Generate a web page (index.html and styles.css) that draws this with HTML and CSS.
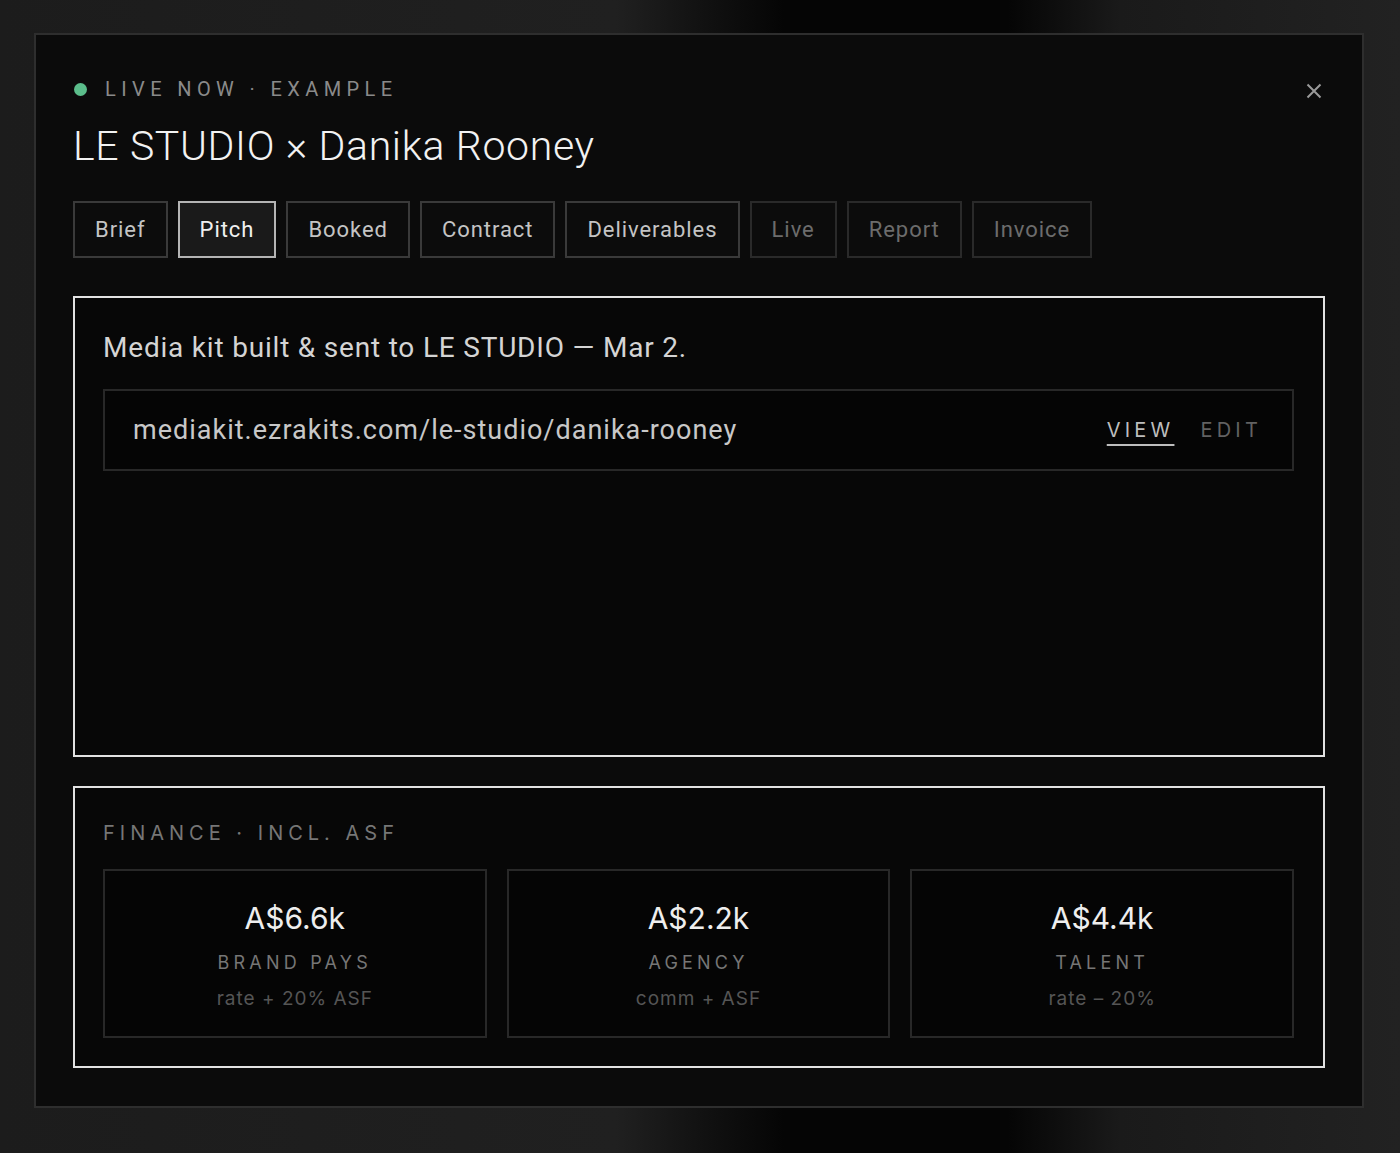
FILE: index.html
```html
<!DOCTYPE html>
<html lang="en">
<head>
  <meta name="viewport" content="width=device-width, initial-scale=1.0">
  <title>LE STUDIO × Danika Rooney</title>
  <link rel="stylesheet" href="styles.css">
</head>
<body>
  <div class="modal">
    <button class="close-button" aria-label="Close">
      <svg width="16" height="16" viewBox="0 0 16 16"><path d="M1.5 1.5 L14.5 14.5 M14.5 1.5 L1.5 14.5" stroke="#9a9a9a" stroke-width="2" fill="none"/></svg>
    </button>

    <div class="status">
      <span class="status-dot"></span>
      <span class="status-text">LIVE NOW · EXAMPLE</span>
    </div>
    <h1 class="deal-title">LE STUDIO × Danika Rooney</h1>

    <div class="stage-tabs">
      <button class="stage-tab">Brief</button>
      <button class="stage-tab active">Pitch</button>
      <button class="stage-tab">Booked</button>
      <button class="stage-tab">Contract</button>
      <button class="stage-tab">Deliverables</button>
      <button class="stage-tab future">Live</button>
      <button class="stage-tab future">Report</button>
      <button class="stage-tab future">Invoice</button>
    </div>

    <section class="stage-panel">
      <p class="stage-note">Media kit built &amp; sent to LE STUDIO — Mar 2.</p>
      <div class="link-box">
        <span class="link-url">mediakit.ezrakits.com/le-studio/danika-rooney</span>
        <div class="link-actions">
          <a href="#" class="link-action primary">VIEW</a>
          <a href="#" class="link-action">EDIT</a>
        </div>
      </div>
    </section>

    <section class="finance-panel">
      <h2 class="finance-heading">FINANCE · INCL. ASF</h2>
      <div class="finance-grid">
        <div class="finance-card">
          <div class="finance-amount">A$6.6k</div>
          <div class="finance-label">BRAND PAYS</div>
          <div class="finance-note">rate + 20% ASF</div>
        </div>
        <div class="finance-card">
          <div class="finance-amount">A$2.2k</div>
          <div class="finance-label">AGENCY</div>
          <div class="finance-note">comm + ASF</div>
        </div>
        <div class="finance-card">
          <div class="finance-amount">A$4.4k</div>
          <div class="finance-label">TALENT</div>
          <div class="finance-note">rate – 20%</div>
        </div>
      </div>
    </section>
  </div>
</body>
</html>
```

FILE: styles.css
```css
body {
  font-family: Roboto, 'Liberation Sans', sans-serif;
  margin: 0;
  padding: 33px 0 0;
  min-height: 100vh;
  box-sizing: border-box;
  color: #ddd;
  background: linear-gradient(90deg, #1c1c1c 0%, #202020 44%, #121212 50%, #050505 56%, #050505 72%, #1a1a1a 80%, #222 100%);
}
.modal {
  position: relative;
  width: 1330px;
  margin: 0 0 0 34px;
  box-sizing: border-box;
  background-color: #0b0b0b;
  border: 2px solid #2e2e2e;
  padding: 42px 37px 38px;
}
.close-button {
  position: absolute;
  top: 48px;
  right: 40px;
  width: 16px;
  height: 16px;
  display: flex;
  align-items: center;
  justify-content: center;
  background: none;
  border: none;
  padding: 0;
  cursor: pointer;
}
.status {
  display: flex;
  align-items: center;
  height: 24px;
}
.status-dot {
  width: 13px;
  height: 13px;
  border-radius: 50%;
  background-color: #5bbd8b;
  margin-left: 1px;
  margin-right: 18px;
}
.status-text {
  font-size: 20px;
  letter-spacing: 5.4px;
  color: #8a8a8a;
}
.deal-title {
  margin: 21px 0 0;
  font-size: 41px;
  line-height: 48px;
  font-weight: 300;
  color: #f2f2f2;
  letter-spacing: 0.65px;
}
.stage-tabs {
  display: flex;
  gap: 10px;
  margin-top: 31px;
}
.stage-tab {
  height: 57px;
  padding: 0 20px;
  font-family: inherit;
  font-size: 22px;
  letter-spacing: 0.95px;
  color: #c4c4c4;
  background-color: #0c0c0c;
  border: 2px solid #3a3a3a;
  cursor: pointer;
}
.stage-tab.active {
  color: #f0f0f0;
  background-color: #1a1a1a;
  border-color: #b4b4b4;
}
.stage-tab.future {
  color: #6c6c6c;
  border-color: #2a2a2a;
}
.stage-panel {
  margin-top: 38px;
  height: 461px;
  box-sizing: border-box;
  border: 2px solid #e2e2e2;
  background-color: #070707;
  padding: 34px 29px 0 28px;
}
.stage-note {
  margin: 0;
  font-size: 28px;
  line-height: 32px;
  color: #d4d4d4;
  letter-spacing: 0.8px;
}
.link-box {
  margin-top: 25px;
  height: 82px;
  box-sizing: border-box;
  display: flex;
  align-items: center;
  justify-content: space-between;
  border: 2px solid #282828;
  background-color: #050505;
  padding: 0 30px 0 28px;
}
.link-url {
  font-size: 27px;
  color: #c8c8c8;
  letter-spacing: 1px;
}
.link-actions {
  display: flex;
  gap: 26px;
}
.link-action {
  font-family: Inter, 'Liberation Sans', sans-serif;
  font-size: 20px;
  letter-spacing: 4.2px;
  color: #626262;
  text-decoration: none;
}
.link-action.primary {
  color: #bdbdbd;
  text-decoration: underline;
  text-decoration-thickness: 2px;
  text-underline-offset: 7px;
}
.finance-panel {
  margin-top: 29px;
  border: 2px solid #e2e2e2;
  background-color: #070707;
  padding: 33px 29px 28px 28px;
}
.finance-heading {
  margin: 0;
  font-family: Inter, 'Liberation Sans', sans-serif;
  font-size: 20px;
  line-height: 24px;
  font-weight: 400;
  letter-spacing: 5px;
  color: #767676;
}
.finance-grid {
  margin-top: 24px;
  display: grid;
  grid-template-columns: repeat(3, 1fr);
  gap: 20px;
}
.finance-card {
  height: 169px;
  box-sizing: border-box;
  border: 2px solid #282828;
  background-color: #050505;
  padding-top: 29px;
  text-align: center;
  font-family: Inter, 'Liberation Sans', sans-serif;
}
.finance-amount {
  font-size: 30px;
  line-height: 36px;
  color: #eeeeee;
}
.finance-label {
  margin-top: 16px;
  font-size: 18px;
  line-height: 22px;
  letter-spacing: 4.2px;
  color: #767676;
}
.finance-note {
  margin-top: 13px;
  font-size: 19px;
  line-height: 24px;
  letter-spacing: 1px;
  color: #555555;
}
```
